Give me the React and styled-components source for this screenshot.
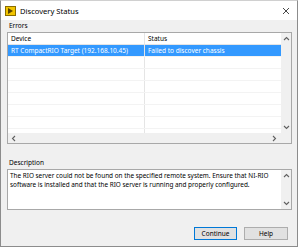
import React from 'react'
import styled, { createGlobalStyle } from 'styled-components'

const GlobalStyle = createGlobalStyle`
  body {
    margin: 0;
    background: #fff;
    font-family: "Noto Sans", "Liberation Sans", sans-serif;
  }
`

const rows = [
  { device: 'RT CompactRIO Target (192.168.10.45)', status: 'Failed to discover chassis', selected: true },
  { device: '', status: '' },
  { device: '', status: '' },
  { device: '', status: '' },
  { device: '', status: '' },
  { device: '', status: '' },
  { device: '', status: '' },
  { device: '', status: '' },
]

const Arrow = ({ dir }) => {
  const d = {
    up: 'M1 4 L3.5 1.5 L6 4',
    down: 'M1 2 L3.5 4.5 L6 2',
    left: 'M4 1 L1.5 3.5 L4 6',
    right: 'M2 1 L4.5 3.5 L2 6',
  }[dir]
  return (
    <svg width="7" height="7" viewBox="0 0 7 7">
      <path d={d} fill="none" stroke="#606060" strokeWidth="1.1" />
    </svg>
  )
}

const App = () => {
  return (
    <>
      <GlobalStyle />
      <Window>
        <TitleBar>
          <AppIcon width="11" height="10" viewBox="0 0 11 10">
            <rect x="0" y="0" width="11" height="10" fill="#f2c500" />
            <rect x="0.5" y="0.5" width="10" height="9" fill="none" stroke="#8a6d00" strokeWidth="1" />
            <path d="M3 2 L8 5 L3 8 Z" fill="#5a4300" />
          </AppIcon>
          <Title>Discovery Status</Title>
          <Close width="8" height="8" viewBox="0 0 8 8">
            <path d="M1 1 L7 7 M7 1 L1 7" stroke="#333" strokeWidth="0.9" />
          </Close>
        </TitleBar>
        <Body>
          <Label $top={1}>Errors</Label>
          <ListBox>
            <TableArea>
              <HeaderRow>
                <Cell $w={137}>Device</Cell>
                <Cell>Status</Cell>
              </HeaderRow>
              {rows.map((r, i) => (
                <Row key={i} $selected={r.selected}>
                  <Cell $w={137}>{r.device}</Cell>
                  <Cell>{r.status}</Cell>
                </Row>
              ))}
            </TableArea>
            <VScroll>
              <Arrow dir="up" />
              <Arrow dir="down" />
            </VScroll>
            <HScroll>
              <Arrow dir="left" />
              <Arrow dir="right" />
            </HScroll>
            <Corner />
          </ListBox>
          <Label $top={14}>Description</Label>
          <DescBox>
            <DescText>
              The RIO server could not be found on the specified remote system. Ensure that NI-RIO
              software is installed and that the RIO server is running and properly configured.
            </DescText>
            <VScroll>
              <Arrow dir="up" />
              <Arrow dir="down" />
            </VScroll>
          </DescBox>
          <Buttons>
            <Button $primary>Continue</Button>
            <Button>Help</Button>
          </Buttons>
        </Body>
      </Window>
    </>
  )
}

const Window = styled.div`
  width: 298px;
  height: 247px;
  box-sizing: border-box;
  border: 1px solid #8c8c8c;
  border-top-color: #d0d0d0;
  background: #f0f0f0;
  display: flex;
  flex-direction: column;
  color: #000;
`

const TitleBar = styled.div`
  height: 19px;
  background: #fff;
  display: flex;
  align-items: center;
  padding: 0 5px 0 4px;
  gap: 4px;
`

const AppIcon = styled.svg`
  flex: none;
`

const Title = styled.div`
  flex: 1;
  font-size: 7.6px;
  color: #000;
`

const Close = styled.svg`
  margin-right: 2px;
`

const Body = styled.div`
  flex: 1;
  display: flex;
  flex-direction: column;
  padding: 0 5px 0 6px;
`

const Label = styled.div`
  font-size: 6.5px;
  line-height: 9px;
  margin-top: ${(p) => p.$top}px;
  margin-bottom: 2px;
  padding-left: 2px;
`

const ListBox = styled.div`
  height: 112px;
  box-sizing: border-box;
  border: 1px solid #a8a8a8;
  background: #fff;
  display: grid;
  grid-template-columns: 1fr 10px;
  grid-template-rows: 1fr 10px;
  overflow: hidden;
`

const TableArea = styled.div`
  overflow: hidden;
  font-size: 6.5px;
`

const HeaderRow = styled.div`
  display: flex;
  height: 11px;
  align-items: center;
  border-bottom: 1px solid #e5e5e5;
  color: #000;
`

const Row = styled.div`
  display: flex;
  height: 11px;
  align-items: center;
  border-bottom: 1px solid #f3f3f3;
  background: ${(p) => (p.$selected ? '#3399ff' : '#fff')};
  color: ${(p) => (p.$selected ? '#fff' : '#000')};
`

const Cell = styled.div`
  box-sizing: border-box;
  width: ${(p) => (p.$w ? `${p.$w}px` : 'auto')};
  flex: ${(p) => (p.$w ? 'none' : '1')};
  padding-left: 3px;
  white-space: nowrap;
  overflow: hidden;
  height: 100%;
  line-height: 11px;
  border-right: ${(p) => (p.$w ? '1px solid #e5e5e5' : 'none')};
`

const VScroll = styled.div`
  background: #f0f0f0;
  display: flex;
  flex-direction: column;
  justify-content: space-between;
  align-items: center;
  padding: 3px 0 2px;
`

const HScroll = styled.div`
  background: #f0f0f0;
  display: flex;
  justify-content: space-between;
  align-items: center;
  padding: 0 3px 0 3px;
`

const Corner = styled.div`
  background: #f0f0f0;
`

const DescBox = styled.div`
  height: 41px;
  box-sizing: border-box;
  border: 1px solid #a8a8a8;
  background: #fff;
  display: grid;
  grid-template-columns: 1fr 10px;
`

const DescText = styled.div`
  font-size: 6.4px;
  line-height: 9px;
  padding: 1px 0 0 2px;
`

const Buttons = styled.div`
  display: flex;
  justify-content: flex-end;
  gap: 7px;
  margin-top: 17px;
  padding-right: 4px;
`

const Button = styled.div`
  width: ${(p) => (p.$primary ? '43px' : '44px')};
  height: 13px;
  box-sizing: border-box;
  border: 1px solid ${(p) => (p.$primary ? '#0078d7' : '#adadad')};
  background: #e1e1e1;
  font-size: 6.5px;
  display: flex;
  align-items: center;
  justify-content: center;
`

export default App
